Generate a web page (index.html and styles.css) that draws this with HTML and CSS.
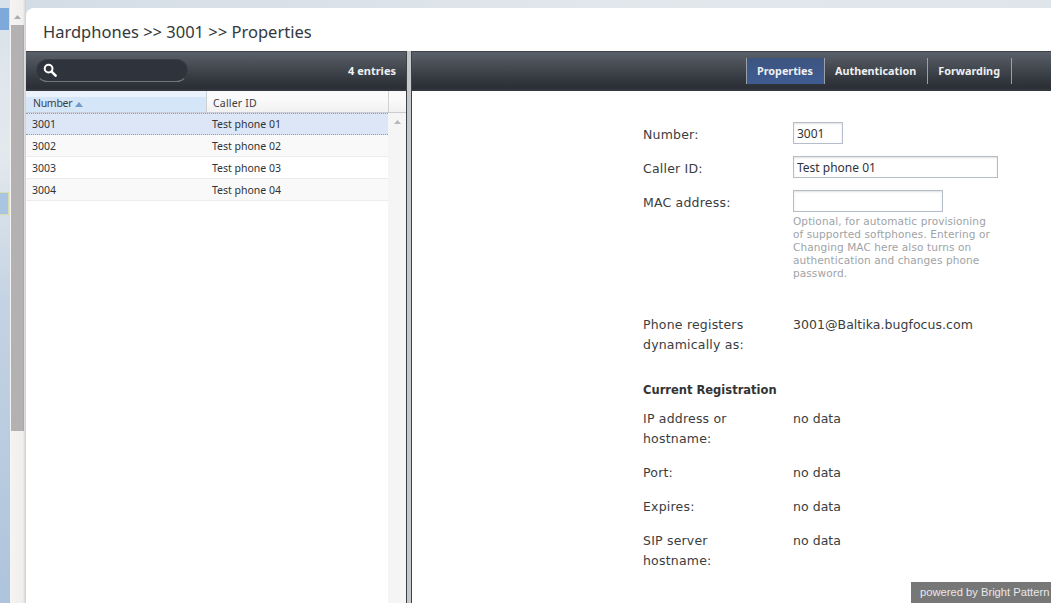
FILE: index.html
```html
<!DOCTYPE html>
<html lang="en">
<head>
<meta charset="utf-8">
<title>Hardphones</title>
<link rel="stylesheet" href="styles.css">
</head>
<body>
<div class="app">
  <aside class="rail">
    <div class="desktop">
      <div class="desk-tab"></div>
      <div class="desk-tab-2"></div>
    </div>
    <div class="scrollbar">
      <div class="sb-arrow"><svg width="9" height="6" viewBox="0 0 9 6"><path d="M4.5 1 8 5H1z" fill="#a9adb0"/></svg></div>
      <div class="sb-thumb"></div>
    </div>
  </aside>
  <main class="main">
    <h1 class="title">Hardphones &gt;&gt; 3001 &gt;&gt; Properties</h1>
    <div class="panes">
      <section class="list-pane">
        <div class="toolbar list-toolbar">
          <div class="search">
            <svg width="14" height="14" viewBox="0 0 14 14"><circle cx="5.6" cy="5.6" r="3.9" fill="none" stroke="#fff" stroke-width="2"/><path d="M8.6 8.6 12.6 12.6" stroke="#fff" stroke-width="2.6" stroke-linecap="round"/></svg>
          </div>
          <span class="entries">4 entries</span>
        </div>
        <div class="grid-head">
          <div class="gh-cell gh-num">Number <svg width="8" height="5" viewBox="0 0 8 5"><path d="M4 0 8 5H0z" fill="#6f9ccb"/></svg></div>
          <div class="gh-cell gh-id">Caller ID</div>
          <div class="gh-end"></div>
        </div>
        <div class="grid-body">
          <div class="rows">
            <div class="row selected"><span class="c-num">3001</span><span>Test phone 01</span></div>
            <div class="row alt"><span class="c-num">3002</span><span>Test phone 02</span></div>
            <div class="row"><span class="c-num">3003</span><span>Test phone 03</span></div>
            <div class="row alt"><span class="c-num">3004</span><span>Test phone 04</span></div>
          </div>
          <div class="grid-scroll"><svg width="9" height="6" viewBox="0 0 9 6"><path d="M4.5 1 8 5H1z" fill="#b4b8bb"/></svg></div>
        </div>
      </section>
      <div class="splitter"></div>
      <section class="detail-pane">
        <div class="toolbar tabs-toolbar">
          <nav class="tabs">
            <a class="tab active">Properties</a>
            <a class="tab">Authentication</a>
            <a class="tab">Forwarding</a>
          </nav>
        </div>
        <div class="form">
          <div class="f-row r-number"><label>Number:</label><input class="inp w-s" value="3001"></div>
          <div class="f-row r-caller"><label>Caller ID:</label><input class="inp w-l" value="Test phone 01"></div>
          <div class="f-row r-mac"><label>MAC address:</label>
            <div><input class="inp w-m">
              <p class="hint">Optional, for automatic provisioning of supported softphones. Entering or Changing MAC here also turns on authentication and changes phone password.</p>
            </div>
          </div>
          <div class="f-row r-reg"><label>Phone registers dynamically as:</label><div class="val">3001@Baltika.bugfocus.com</div></div>
          <h2 class="sub">Current Registration</h2>
          <div class="f-row r-ip"><label>IP address or hostname:</label><div class="val">no data</div></div>
          <div class="f-row r-port"><label>Port:</label><div class="val">no data</div></div>
          <div class="f-row r-exp"><label>Expires:</label><div class="val">no data</div></div>
          <div class="f-row"><label>SIP server hostname:</label><div class="val">no data</div></div>
        </div>
      </section>
    </div>
  </main>
</div>
<div class="powered">powered by Bright Pattern</div>
</body>
</html>
```
FILE: styles.css
```css
* { box-sizing: border-box; }
html, body { margin: 0; height: 100%; overflow: hidden; }
body { font-family: "DejaVu Sans", sans-serif; color: #333; background: #dfe5ec; }
.app { display: flex; height: 603px; padding-top: 8px; background: linear-gradient(90deg, #d3dce6, #e2e7ec 60%, #dfe5ea); }
.rail { width: 26px; margin-top: -8px; display: flex; flex: none; }
.desktop { width: 10px; background: linear-gradient(180deg, #d9e2ea 0, #e4e9ee 25%, #c4d3e3 50%, #aec4dc 100%); padding-top: 8px; }
.desk-tab { height: 22px; width: 9px; background: #7eaadb; }
.desk-tab-2 { height: 23px; width: 9px; margin-top: 162px; background: #a9c5e2; border: 1px solid #d6dcae; border-left: 0; }
.scrollbar { width: 16px; background: linear-gradient(90deg, #f6f3f3 0, #f1eeee 80%, #cfcfcf 100%); padding-top: 8px; }
.sb-arrow { height: 17px; display: flex; justify-content: center; align-items: center; padding-right: 2px; }
.sb-thumb { width: 13px; height: 406px; margin-left: 1px; background: #b3b1b1; border-right: 1px solid #a9a7a7; }
.main { flex: 1; min-width: 0; background: #fff; border-top-left-radius: 8px; display: flex; flex-direction: column; }
.title { margin: 0; height: 43px; padding: 13px 0 0 17px; font: 400 16.5px/22px "Noto Sans", sans-serif; color: #33393d; }
.panes { flex: 1; display: flex; min-height: 0; }
.list-pane { width: 380px; flex: none; display: flex; flex-direction: column; }
.splitter { width: 6px; flex: none; background: #c7c8ca; border-left: 1px solid #3d4248; border-right: 1px solid #3d4248; }
.detail-pane { flex: 1; min-width: 0; display: flex; flex-direction: column; }
.toolbar { height: 40px; flex: none; display: flex; align-items: center; background: linear-gradient(180deg, #5a6069 0, #4b5058 30%, #33373e 75%, #2b2e34 100%); border-top: 1px solid #3f444b; border-bottom: 2px solid #34383e; }
.list-toolbar { justify-content: space-between; padding: 0 10px; }
.search { width: 152px; height: 23px; border-radius: 12px; background: #2f333c; border: 1px solid #3a3e47; border-bottom-color: #70757c; padding: 3px 0 0 6px; }
.search svg { display: block; }
.entries { font: 700 11px/14px "Noto Sans", sans-serif; color: #eef0f2; }
.grid-head { height: 22px; flex: none; display: flex; font: 400 10.5px/24px "Noto Sans", sans-serif; color: #3c4045; background: linear-gradient(180deg, #fafafa 0 40%, #f1f1f1 100%); border-bottom: 1px solid #c9cdd2; }
.gh-cell { padding-left: 7px; border-right: 1px solid #cfd1d4; }
.gh-num { width: 181px; letter-spacing: -0.3px; background: linear-gradient(180deg, #eaf3fc 0 30%, #d5e6f8 30% 100%); }
.gh-num svg { margin-left: 0; }
.gh-id { width: 182px; padding-left: 6px; letter-spacing: 0.2px; }
.gh-end { flex: 1; }
.grid-body { flex: 1; display: flex; min-height: 0; }
.rows { width: 362px; flex: none; }
.row { display: flex; height: 22px; font: 400 10.5px/22px "Noto Sans", sans-serif; color: #2f3337; border-bottom: 1px solid #ebeced; }
.row.alt { background: #f9f9f9; }
.row.selected { background: #dce6f6; border-top: 1px dotted #8f9cb5; border-bottom: 1px dotted #8f9cb5; line-height: 20px; }
.c-num { width: 186px; padding-left: 6px; }
.grid-scroll { width: 18px; background: #f5f5f5; display: flex; justify-content: center; padding-top: 6px; }
.grid-scroll svg { display: block; }
.form { padding: 34px 0 0 231px; font-size: 12.5px; line-height: 20px; color: #3a3d40; letter-spacing: 0.2px; }
.f-row { display: flex; width: 360px; margin-bottom: 14px; }
.f-row label { width: 150px; flex: none; padding-right: 30px; }
.f-row > div { min-width: 0; }
.val { letter-spacing: 0.04px; }
.r-number { height: 20px; }
.r-caller { height: 20px; }
.inp { display: block; height: 22px; margin-top: -3px; padding: 0 3px; font: 400 12px/20px "Noto Sans", sans-serif; color: #2f3337; background: #fff; border: 1px solid #b4bdc9; box-shadow: inset 0 1px 2px #e0e0e0; border-radius: 0; outline: 0; }
.w-s { width: 50px; }
.w-l { width: 205px; }
.w-m { width: 150px; }
.hint { margin: 3px 0 0; width: 205px; font-size: 10.5px; line-height: 13px; color: #a0a3a6; letter-spacing: 0.1px; }
.r-mac { margin-bottom: 35px; }
.r-reg { margin-bottom: 25px; }
.sub { margin: 0 0 9px; font-size: 11.5px; font-weight: 700; line-height: 20px; color: #333; letter-spacing: 0; }
.powered { position: absolute; right: 0; bottom: 0; width: 140px; height: 21px; padding-left: 9px; background: #777; color: #e8e8e8; font: 400 11.2px/21px "Liberation Sans", sans-serif; }
.tabs-toolbar { justify-content: flex-start; padding-left: 334px; }
.tabs { display: flex; height: 26px; margin-top: 1px; border-left: 1px solid #9aa0a8; }
.tab { display: block; height: 26px; padding: 0 11px 0 10px; border-right: 1px solid #9aa0a8; font: 700 10.8px/26px "Noto Sans", sans-serif; color: #eef0f2; }
.tab.active { background: linear-gradient(180deg, #3c5480 0, #3f5c92 100%); }
```
